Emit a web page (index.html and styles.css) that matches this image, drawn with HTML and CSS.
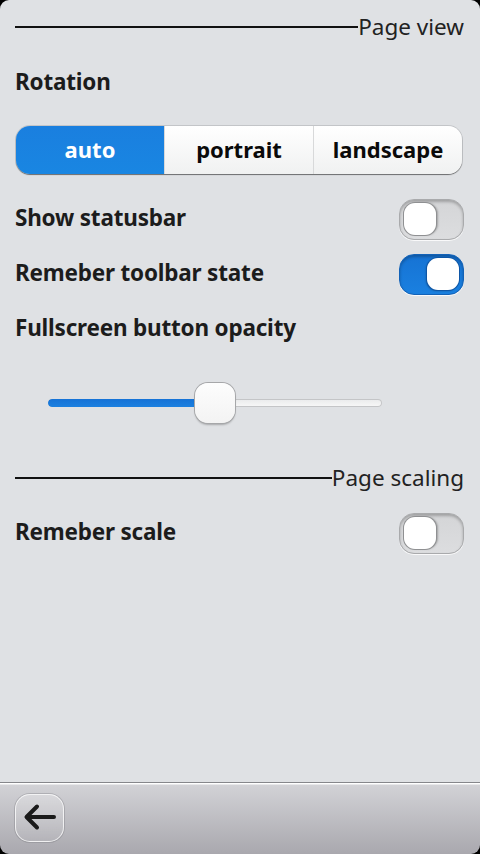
FILE: index.html
```html
<!DOCTYPE html>
<html>
<head>
<meta charset="utf-8">
<link rel="stylesheet" href="styles.css">
</head>
<body>
<div class="screen">
  <main class="content">
    <div class="section"><span class="rule"></span><span class="section-title">Page view</span></div>
    <div class="label-row"><span class="label">Rotation</span></div>
    <div class="segmented">
      <div class="seg active">auto</div>
      <div class="seg">portrait</div>
      <div class="seg">landscape</div>
    </div>
    <div class="row first"><span class="label">Show statusbar</span><span class="toggle"><span class="knob"></span></span></div>
    <div class="row"><span class="label">Remeber toolbar state</span><span class="toggle on"><span class="knob"></span></span></div>
    <div class="row"><span class="label">Fullscreen button opacity</span></div>
    <div class="slider-row">
      <div class="slider">
        <div class="track"><div class="fill" style="width:50%"></div></div>
        <div class="thumb" style="left:50%"></div>
      </div>
    </div>
    <div class="section second"><span class="rule"></span><span class="section-title">Page scaling</span></div>
    <div class="row last"><span class="label">Remeber scale</span><span class="toggle"><span class="knob"></span></span></div>
  </main>
  <footer class="toolbar">
    <button class="back" aria-label="Back">
      <svg width="49" height="48" viewBox="0 0 49 48"><path d="M39 23H12M22 12.5L11.5 23L22 33.5" fill="none" stroke="#1a1a1a" stroke-width="4" stroke-linecap="round" stroke-linejoin="round"/></svg>
    </button>
  </footer>
</div>
</body>
</html>
```
FILE: styles.css
```css
html, body { margin: 0; padding: 0; background: #000; }
body { width: 480px; height: 854px; overflow: hidden; font-family: "Noto Sans", "Open Sans", sans-serif; color: #1c1c1c; }
.screen { width: 480px; height: 854px; display: flex; flex-direction: column; }
.content { flex: 1; background: #dfe1e4; border-radius: 9px 9px 0 0; padding: 0 16px 0 15px; }
.section { display: flex; align-items: center; height: 34px; margin-top: 10px; }
.section.second { margin-top: 10px; }
.rule { flex: 1; height: 2px; background: #111; }
.section-title { font-size: 22.5px; font-weight: 400; color: #222; line-height: 34px; letter-spacing: 0; }
.label-row { height: 74px; display: flex; align-items: center; }
.label { font-size: 22.5px; font-weight: 700; color: #1c1c1c; letter-spacing: -0.2px; }
.segmented { margin-top: 8px; margin-left: 1px; margin-right: 2px; height: 48px; display: flex; border-radius: 14px; overflow: hidden; box-shadow: 0 1px 1px rgba(0,0,0,0.45), 0 0 0 1px rgba(0,0,0,0.12); }
.seg { flex: 1; display: flex; align-items: center; justify-content: center; padding-bottom: 3px; box-sizing: border-box; font-size: 22px; font-weight: 700; color: #0a0a0a; background: linear-gradient(#ffffff, #f0f1f1); border-left: 1px solid #d8d9da; }
.seg:first-child { border-left: none; }
.seg.active { color: #fff; background: linear-gradient(#1a7fdf, #1986e2); }
.row { height: 55px; display: flex; align-items: center; justify-content: space-between; }
.row.first { margin-top: 16px; }
.row.last { height: 72px; }
.toggle { position: relative; width: 65px; height: 41px; border-radius: 15px; box-sizing: border-box; background: linear-gradient(#d4d5d7, #dcdddf); border: 1px solid #a9aaac; box-shadow: inset 0 2px 3px rgba(0,0,0,0.25), 0 1px 0 rgba(255,255,255,0.8); margin-top: 4px; }
.toggle .knob { position: absolute; left: 4px; top: 3px; width: 32px; height: 32px; border-radius: 11px; background: #fff; box-shadow: 0 0 0 1px #8f9092, 2px 0 2px rgba(0,0,0,0.25); }
.toggle.on { background: linear-gradient(#1673d4, #1a80e0); border-color: #1262b8; }
.toggle.on .knob { left: auto; right: 4px; box-shadow: 0 0 0 1px #0e56a6, -1px 1px 2px rgba(0,0,0,0.3); }
.slider-row { height: 96px; display: flex; align-items: center; padding: 0 82px 0 33px; }
.slider { position: relative; flex: 1; height: 40px; display: flex; align-items: center; }
.track { flex: 1; height: 8px; border-radius: 4px; background: linear-gradient(#e9eaeb, #f8f8f8); box-shadow: inset 0 0 0 1px #c4c5c7; overflow: hidden; }
.fill { height: 100%; background: linear-gradient(#1572d6, #1b80e0); border-radius: 4px 0 0 4px; }
.thumb { position: absolute; top: 0; width: 40px; height: 40px; margin-left: -20px; border-radius: 13px; background: linear-gradient(#fdfdfd, #f3f3f3); box-shadow: 0 0 0 1px #a6a7a9, 0 2px 2px rgba(0,0,0,0.25); box-sizing: border-box; }
.toolbar { height: 72px; box-sizing: border-box; border-top: 1px solid #86878b; background: linear-gradient(#ffffff 0, #ffffff 1px, #d2d2d6 2px, #a9a8ae 100%); border-radius: 0 0 9px 9px; padding: 11px 0 0 15px; }
.back { width: 49px; height: 48px; padding: 0; border-radius: 15px; border: 1px solid rgba(255,255,255,0.75); background: linear-gradient(rgba(255,255,255,0.25), rgba(255,255,255,0.05)); box-shadow: 0 0 0 1px rgba(120,120,125,0.35); display: block; }
.back svg { display: block; margin: -1px; }
```
